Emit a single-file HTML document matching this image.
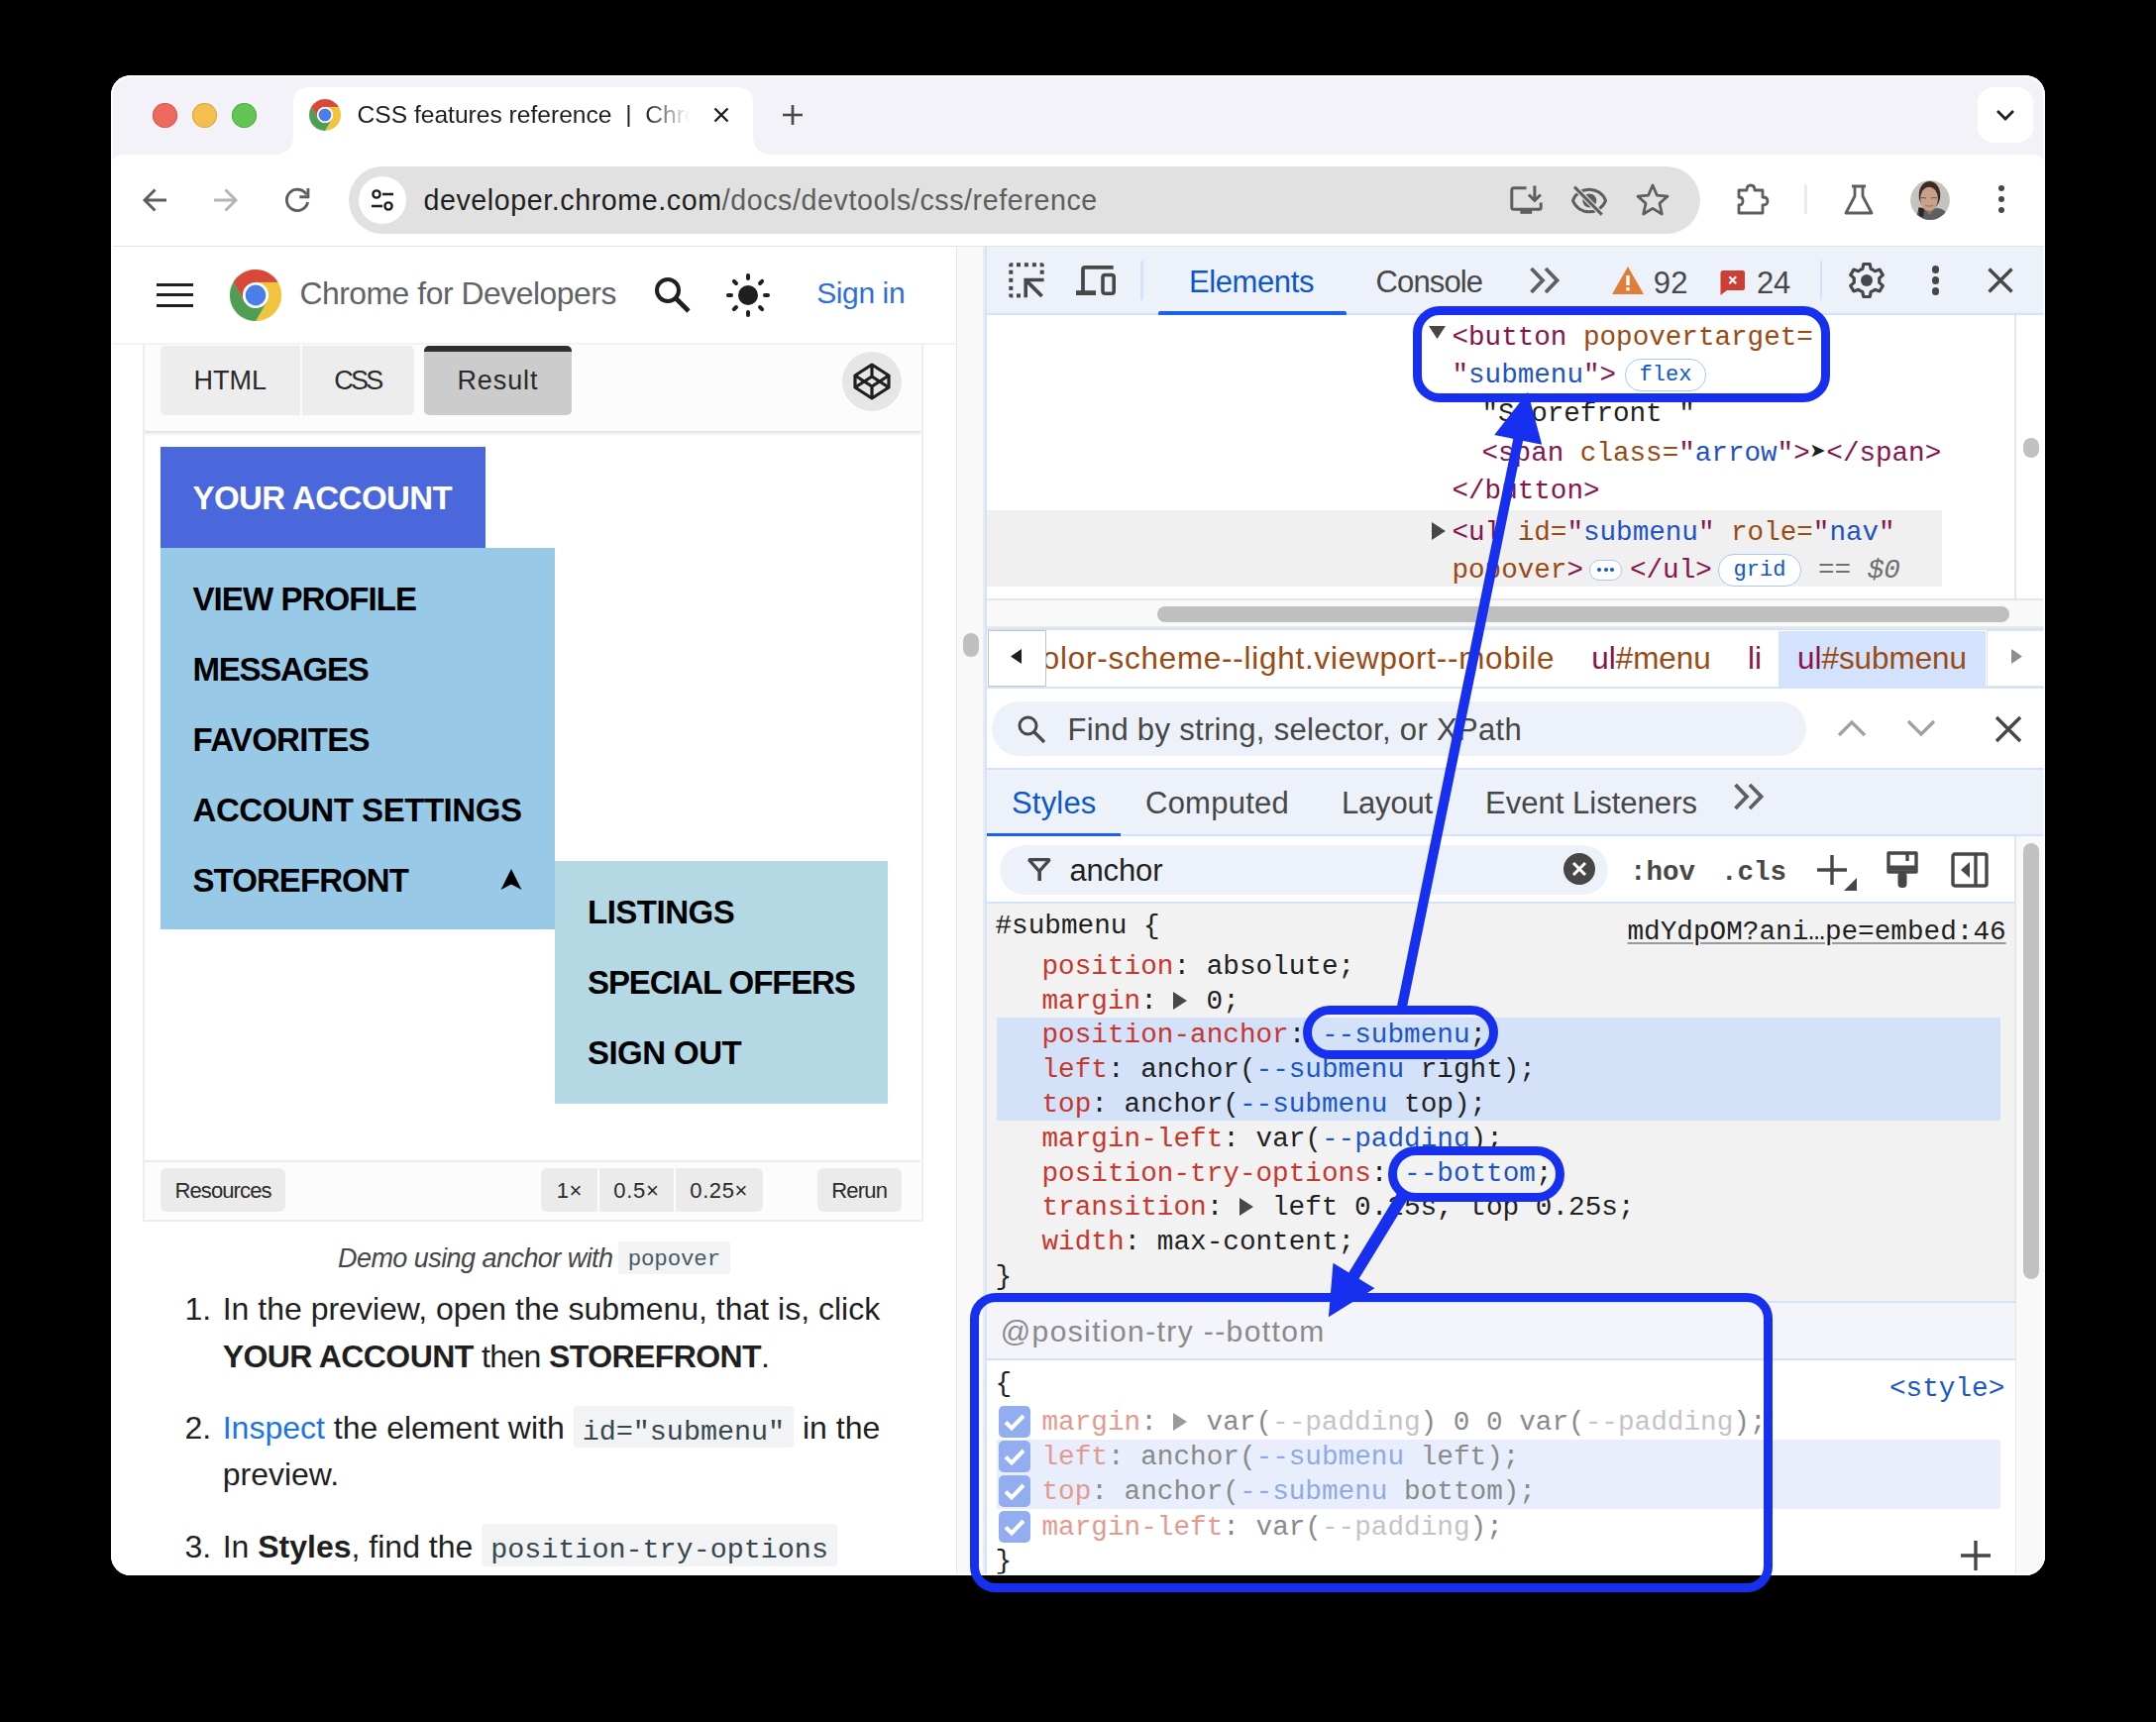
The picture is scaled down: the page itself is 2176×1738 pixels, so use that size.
<!DOCTYPE html><html><head><meta charset="utf-8"><style>
html,body{margin:0;padding:0;width:2176px;height:1738px;overflow:hidden;background:#000;}
.a{position:absolute;}
.t{white-space:pre;}
b{font-weight:700;}
</style></head><body>
<div class="a" style="left:112.0px;top:76.0px;width:1952.0px;height:1514.0px;background:#fff;border-radius:20px;"></div>
<div class="a" style="left:0;top:0;width:2176px;height:1738px;clip-path:inset(76px 112px 148px 112px round 20px);">
<div class="a" style="left:112.0px;top:76.0px;width:1952.0px;height:93.0px;background:#f3f2f8;"></div>
<div class="a" style="left:153.5px;top:104.0px;width:25.0px;height:25.0px;background:#ee6a5f;border-radius:50%;box-shadow:inset 0 0 0 1px #d7594f;"></div>
<div class="a" style="left:193.5px;top:104.0px;width:25.0px;height:25.0px;background:#f5bf4f;border-radius:50%;box-shadow:inset 0 0 0 1px #dba63c;"></div>
<div class="a" style="left:233.5px;top:104.0px;width:25.0px;height:25.0px;background:#62c554;border-radius:50%;box-shadow:inset 0 0 0 1px #52ad45;"></div>
<svg class="a" style="left:276.0px;top:88.0px;" width="504" height="68" viewBox="0 0 504 68"><path d="M0 68 Q20 68 20 48 L20 16 Q20 0 36 0 L468 0 Q484 0 484 16 L484 48 Q484 68 504 68 Z" fill="#fff"/></svg>
<svg class="a" style="left:311.6px;top:99.8px;" width="32" height="32" viewBox="0 0 32 32"><g transform="translate(16,16) scale(16)"><path d="M0 -0.5H0.866A1 1 0 0 0 -0.866 -0.5L-0.433 0.25A0.5 0.5 0 0 1 0 -0.5Z" fill="#d8493a" stroke="#d8493a" stroke-width="0.01"/><path d="M0 -0.5H0.866A1 1 0 0 0 -0.866 -0.5L-0.433 0.25A0.5 0.5 0 0 1 0 -0.5Z" fill="#f2c33e" transform="rotate(120)" stroke="#f2c33e" stroke-width="0.01"/><path d="M0 -0.5H0.866A1 1 0 0 0 -0.866 -0.5L-0.433 0.25A0.5 0.5 0 0 1 0 -0.5Z" fill="#4e9f54" transform="rotate(240)" stroke="#4e9f54" stroke-width="0.01"/><circle r="0.5" fill="#fff"/><circle r="0.4" fill="#4a7ee8"/></g></svg>
<div class="a t" style="left:360.5px;top:103.7px;font:24.6px/24.6px 'Liberation Sans',sans-serif;color:#1f1f1f;white-space:pre;width:335px;overflow:hidden;-webkit-mask-image:linear-gradient(90deg,#000 290px,transparent 335px);">CSS features reference  |  Chrome for Developers</div>
<svg class="a" style="left:719.8px;top:108.3px;" width="16" height="16" viewBox="0 0 16 16"><path d="M1.5 1.5L14.5 14.5M14.5 1.5L1.5 14.5" stroke="#1f1f1f" stroke-width="2.4"/></svg>
<svg class="a" style="left:789.6px;top:106.0px;" width="20" height="20" viewBox="0 0 20 20"><path d="M10 0V20M0 10H20" stroke="#474747" stroke-width="2.6"/></svg>
<div class="a" style="left:1996.0px;top:88.0px;width:56.0px;height:56.0px;background:#fff;border-radius:16px;"></div>
<svg class="a" style="left:2014.0px;top:110.0px;" width="20" height="12" viewBox="0 0 20 12"><path d="M2 2L10 10L18 2" stroke="#1f1f1f" stroke-width="2.8" fill="none"/></svg>
<div class="a" style="left:112.0px;top:156.0px;width:1952.0px;height:93.0px;background:#fff;border-radius:12px 12px 0 0;"></div>
<div class="a" style="left:112.0px;top:247.5px;width:1952.0px;height:2.0px;background:#e3e3e3;"></div>
<svg class="a" style="left:140.0px;top:186.0px;" width="32" height="32" viewBox="0 0 32 32"><path d="M28 16H6M16.5 5.5L6 16L16.5 26.5" stroke="#5e5e5e" stroke-width="2.9" fill="none"/></svg>
<svg class="a" style="left:212.0px;top:186.0px;" width="32" height="32" viewBox="0 0 32 32"><path d="M4 16H26M15.5 5.5L26 16L15.5 26.5" stroke="#b4b4b4" stroke-width="2.9" fill="none"/></svg>
<svg class="a" style="left:284.0px;top:186.0px;" width="32" height="32" viewBox="0 0 32 32"><path d="M26.6 18A10.7 10.7 0 1 1 25.2 10.2" stroke="#5e5e5e" stroke-width="2.9" fill="none"/><path d="M26.9 4V12.8H18.3" stroke="#5e5e5e" stroke-width="2.9" fill="none"/></svg>
<div class="a" style="left:352.0px;top:168.0px;width:1364.0px;height:68.0px;background:#e1e1e1;border-radius:34px;"></div>
<div class="a" style="left:362.0px;top:178.0px;width:48.0px;height:48.0px;background:#fff;border-radius:50%;"></div>
<svg class="a" style="left:372.0px;top:188.0px;" width="28" height="28" viewBox="0 0 28 28"><circle cx="8" cy="8" r="3.6" stroke="#1f1f1f" stroke-width="2.4" fill="none"/><path d="M14 8H25" stroke="#1f1f1f" stroke-width="2.4"/><circle cx="20" cy="20" r="3.6" stroke="#1f1f1f" stroke-width="2.4" fill="none"/><path d="M3 20H14" stroke="#1f1f1f" stroke-width="2.4"/></svg>
<div class="a t" style="left:427.4px;top:187.7px;font:28.6px/28.6px 'Liberation Sans',sans-serif;letter-spacing:0.6px;color:#1f1f1f;white-space:pre;">developer.chrome.com<span style="color:#5e5e5e">/docs/devtools/css/reference</span></div>
<svg class="a" style="left:1522.0px;top:184.0px;" width="40" height="36" viewBox="0 0 40 36"><path d="M18.5 5.8H5.8Q3.8 5.8 3.8 7.8V25.2Q3.8 27.2 5.8 27.2H31.2Q33.2 27.2 33.2 25.2V20.5" stroke="#5e5e5e" stroke-width="3" fill="none"/><path d="M26.9 3.5V18.5M20.9 12.5L26.9 18.5L32.9 12.5" stroke="#5e5e5e" stroke-width="3" fill="none"/><rect x="12.4" y="27.5" width="11.8" height="4.3" fill="#5e5e5e"/></svg>
<svg class="a" style="left:1584.0px;top:184.0px;" width="40" height="40" viewBox="0 0 40 40"><path d="M3.5 18.5C9 3.5 31 3.5 36.5 18.5C31 33.5 9 33.5 3.5 18.5Z" stroke="#5e5e5e" stroke-width="3" fill="none"/><circle cx="20.3" cy="18.5" r="7" fill="#5e5e5e"/><path d="M5 4.6L32.7 32.6" stroke="#e1e1e1" stroke-width="5.5"/><path d="M5 4.6L32.7 32.6" stroke="#5e5e5e" stroke-width="3"/></svg>
<svg class="a" style="left:1650.0px;top:184.0px;" width="36" height="36" viewBox="0 0 36 36"><path d="M18 3L22.4 13.2L33 14.1L25 21.2L27.3 32L18 26.4L8.7 32L11 21.2L3 14.1L13.6 13.2Z" stroke="#5e5e5e" stroke-width="2.8" fill="none" stroke-linejoin="round"/></svg>
<svg class="a" style="left:1750.0px;top:182.0px;" width="38" height="38" viewBox="0 0 38 38"><path d="M5 10H13Q13 5 17 5Q21 5 21 10H29V17Q34 17 34 21Q34 25 29 25V33H5V25Q9 25 9 21Q9 17 5 17Z" stroke="#5e5e5e" stroke-width="2.8" fill="none" stroke-linejoin="round"/></svg>
<div class="a" style="left:1820.5px;top:186.0px;width:3.0px;height:30.0px;background:#ebeaf2;border-radius:2px;"></div>
<svg class="a" style="left:1858.0px;top:184.0px;" width="36" height="36" viewBox="0 0 36 36"><path d="M11 4H25M14 4V14L5 31H31L22 14V4" stroke="#5e5e5e" stroke-width="2.8" fill="none" stroke-linejoin="round"/></svg>
<svg class="a" style="left:1928.0px;top:182.0px;" width="40" height="40" viewBox="0 0 40 40"><defs><clipPath id="av"><circle cx="20" cy="20" r="19.9"/></clipPath></defs><g clip-path="url(#av)"><rect width="40" height="40" fill="#c3c3bf"/><ellipse cx="19.5" cy="15" rx="10.8" ry="14" fill="#3a2b23"/><path d="M5 40L8 30Q13 25 19 31Q27 25 35 31L37 40Z" fill="#5b5f61"/><path d="M8 28Q11 26 14 30L13 37L9 36Z" fill="#2e2420"/><path d="M12.5 27L19.5 35L25 28Z" fill="#9c7058"/><ellipse cx="19" cy="18.8" rx="9" ry="12" fill="#c9a08a"/><path d="M10 18Q13 17 16 18M21 18Q24 17 27 18" stroke="#6b5a50" stroke-width="1.2" fill="none"/><path d="M15 25Q19 27.5 23 25" stroke="#a87a70" stroke-width="1.4" fill="none"/></g></svg>
<div class="a" style="left:2017.0px;top:187.0px;width:6.0px;height:6.0px;background:#474747;border-radius:50%;"></div>
<div class="a" style="left:2017.0px;top:198.0px;width:6.0px;height:6.0px;background:#474747;border-radius:50%;"></div>
<div class="a" style="left:2017.0px;top:209.0px;width:6.0px;height:6.0px;background:#474747;border-radius:50%;"></div>
<div class="a" style="left:112.0px;top:249.0px;width:853.0px;height:1341.0px;background:#fff;"></div>
<div class="a" style="left:144.0px;top:300.0px;width:788.0px;height:932.5px;background:#fff;border:2px solid #ededed;box-sizing:border-box;"></div>
<div class="a" style="left:146.0px;top:347.0px;width:783.0px;height:88.0px;background:#fcfcfc;"></div>
<div class="a" style="left:162.0px;top:349.0px;width:141.0px;height:70.0px;background:#ededed;border-radius:5px 0 0 5px;"></div>
<div class="a" style="left:305.0px;top:349.0px;width:113.0px;height:70.0px;background:#ededed;border-radius:0 5px 5px 0;"></div>
<div class="a" style="left:428.0px;top:349.0px;width:149.0px;height:70.0px;background:#cccccc;border-radius:5px;border-top:6.5px solid #2f2f2f;box-sizing:border-box;"></div>
<div class="a t" style="left:195.4px;top:371.2px;font-family:'Liberation Sans',sans-serif;font-size:27.00px;line-height:27.00px;color:#2a2a2a;font-weight:400;font-style:normal;letter-spacing:0.025px;">HTML</div>
<div class="a t" style="left:337.3px;top:371.2px;font-family:'Liberation Sans',sans-serif;font-size:27.00px;line-height:27.00px;color:#2a2a2a;font-weight:400;font-style:normal;letter-spacing:-2.772px;">CSS</div>
<div class="a t" style="left:461.4px;top:371.2px;font-family:'Liberation Sans',sans-serif;font-size:27.00px;line-height:27.00px;color:#2a2a2a;font-weight:400;font-style:normal;letter-spacing:0.911px;">Result</div>
<div class="a" style="left:850.0px;top:355.0px;width:60.0px;height:60.0px;background:#e6e6e6;border-radius:50%;"></div>
<svg class="a" style="left:860.0px;top:365.0px;" width="40" height="40" viewBox="0 0 40 40"><g fill="none" stroke="#1f1f1f" stroke-width="3.2" stroke-linejoin="round"><path d="M20 3L37 14V26L20 37L3 26V14Z"/><path d="M3 14L20 25L37 14M20 3V14M3 26L20 15L37 26M20 37V26"/></g></svg>
<div class="a" style="left:146.0px;top:435.0px;width:783.0px;height:736.0px;background:#fff;"></div>
<div class="a" style="left:146.0px;top:435.0px;width:783.0px;height:6.0px;background:linear-gradient(rgba(0,0,0,0.13),rgba(0,0,0,0.04) 50%,rgba(0,0,0,0));"></div>
<div class="a" style="left:162.0px;top:451.0px;width:327.8px;height:101.8px;background:#4a68db;"></div>
<div class="a" style="left:162.0px;top:553.0px;width:397.9px;height:385.0px;background:#98cae8;"></div>
<div class="a" style="left:559.9px;top:868.8px;width:335.9px;height:245.2px;background:#b5d8e5;"></div>
<div class="a t" style="left:194.5px;top:486.4px;font-family:'Liberation Sans',sans-serif;font-size:33.00px;line-height:33.00px;color:#fff;font-weight:700;font-style:normal;letter-spacing:-0.548px;">YOUR ACCOUNT</div>
<div class="a t" style="left:194.5px;top:588.4px;font-family:'Liberation Sans',sans-serif;font-size:33.00px;line-height:33.00px;color:#000;font-weight:700;font-style:normal;letter-spacing:-0.918px;">VIEW PROFILE</div>
<div class="a t" style="left:194.5px;top:658.8px;font-family:'Liberation Sans',sans-serif;font-size:33.00px;line-height:33.00px;color:#000;font-weight:700;font-style:normal;letter-spacing:-1.256px;">MESSAGES</div>
<div class="a t" style="left:194.5px;top:730.0px;font-family:'Liberation Sans',sans-serif;font-size:33.00px;line-height:33.00px;color:#000;font-weight:700;font-style:normal;letter-spacing:-0.698px;">FAVORITES</div>
<div class="a t" style="left:194.5px;top:801.4px;font-family:'Liberation Sans',sans-serif;font-size:33.00px;line-height:33.00px;color:#000;font-weight:700;font-style:normal;letter-spacing:-0.448px;">ACCOUNT SETTINGS</div>
<div class="a t" style="left:194.5px;top:872.2px;font-family:'Liberation Sans',sans-serif;font-size:33.00px;line-height:33.00px;color:#000;font-weight:700;font-style:normal;letter-spacing:-0.933px;">STOREFRONT</div>
<svg class="a" style="left:504.0px;top:876.0px;" width="24" height="24" viewBox="0 0 24 24"><path d="M12 1L22.5 22L12 16.5L1.5 22Z" fill="#000"/></svg>
<div class="a t" style="left:593.0px;top:904.0px;font-family:'Liberation Sans',sans-serif;font-size:33.00px;line-height:33.00px;color:#000;font-weight:700;font-style:normal;letter-spacing:-0.497px;">LISTINGS</div>
<div class="a t" style="left:593.0px;top:975.0px;font-family:'Liberation Sans',sans-serif;font-size:33.00px;line-height:33.00px;color:#000;font-weight:700;font-style:normal;letter-spacing:-1.124px;">SPECIAL OFFERS</div>
<div class="a t" style="left:593.0px;top:1046.0px;font-family:'Liberation Sans',sans-serif;font-size:33.00px;line-height:33.00px;color:#000;font-weight:700;font-style:normal;letter-spacing:-0.563px;">SIGN OUT</div>
<div class="a" style="left:146.0px;top:1171.0px;width:783.0px;height:59.0px;background:#fcfcfc;border-top:2px solid #ebebeb;box-sizing:border-box;"></div>
<div class="a" style="left:162.0px;top:1179.0px;width:125.8px;height:43.5px;background:#ebebeb;border-radius:6px;"></div>
<div class="a" style="left:546.2px;top:1179.0px;width:56.8px;height:43.5px;background:#ebebeb;border-radius:6px 0 0 6px;"></div>
<div class="a" style="left:605.0px;top:1179.0px;width:75.0px;height:43.5px;background:#ebebeb;"></div>
<div class="a" style="left:681.8px;top:1179.0px;width:87.9px;height:43.5px;background:#ebebeb;border-radius:0 6px 6px 0;"></div>
<div class="a" style="left:824.7px;top:1179.0px;width:85.1px;height:43.5px;background:#ebebeb;border-radius:6px;"></div>
<div class="a t" style="left:176.4px;top:1191.3px;font-family:'Liberation Sans',sans-serif;font-size:22.00px;line-height:22.00px;color:#2a2a2a;font-weight:400;font-style:normal;letter-spacing:-0.873px;">Resources</div>
<div class="a t" style="left:561.7px;top:1191.3px;font-family:'Liberation Sans',sans-serif;font-size:22.00px;line-height:22.00px;color:#2a2a2a;font-weight:400;font-style:normal;letter-spacing:0.458px;">1×</div>
<div class="a t" style="left:619.2px;top:1191.3px;font-family:'Liberation Sans',sans-serif;font-size:22.00px;line-height:22.00px;color:#2a2a2a;font-weight:400;font-style:normal;letter-spacing:0.742px;">0.5×</div>
<div class="a t" style="left:696.3px;top:1191.3px;font-family:'Liberation Sans',sans-serif;font-size:22.00px;line-height:22.00px;color:#2a2a2a;font-weight:400;font-style:normal;letter-spacing:0.607px;">0.25×</div>
<div class="a t" style="left:839.2px;top:1191.3px;font-family:'Liberation Sans',sans-serif;font-size:22.00px;line-height:22.00px;color:#2a2a2a;font-weight:400;font-style:normal;letter-spacing:-0.784px;">Rerun</div>
<div class="a t" style="left:341.0px;top:1256.5px;font-family:'Liberation Sans',sans-serif;font-size:27.00px;line-height:27.00px;color:#474747;font-weight:400;font-style:italic;letter-spacing:-0.552px;">Demo using anchor with</div>
<div class="a" style="left:624.0px;top:1253.2px;width:112.8px;height:33.3px;background:#f1f3f4;border-radius:3px;"></div>
<div class="a t" style="left:633.7px;top:1260.4px;font-family:'Liberation Mono',monospace;font-size:22.50px;line-height:22.50px;color:#4b5a63;font-weight:400;font-style:normal;letter-spacing:-0.174px;">popover</div>
<div class="a" style="left:112.0px;top:249.0px;width:853.0px;height:98.0px;background:#fff;"></div>
<div class="a" style="left:112.0px;top:345.5px;width:853.0px;height:2.0px;background:#f1f3f4;"></div>
<div class="a" style="left:157.5px;top:285.9px;width:37.0px;height:3.2px;background:#1f1f1f;"></div>
<div class="a" style="left:157.5px;top:296.0px;width:37.0px;height:3.2px;background:#1f1f1f;"></div>
<div class="a" style="left:157.5px;top:306.8px;width:37.0px;height:3.2px;background:#1f1f1f;"></div>
<svg class="a" style="left:232.0px;top:271.6px;" width="52" height="52" viewBox="0 0 52 52"><g transform="translate(26,26) scale(26)"><path d="M0 -0.5H0.866A1 1 0 0 0 -0.866 -0.5L-0.433 0.25A0.5 0.5 0 0 1 0 -0.5Z" fill="#d8493a" stroke="#d8493a" stroke-width="0.01"/><path d="M0 -0.5H0.866A1 1 0 0 0 -0.866 -0.5L-0.433 0.25A0.5 0.5 0 0 1 0 -0.5Z" fill="#f2c33e" transform="rotate(120)" stroke="#f2c33e" stroke-width="0.01"/><path d="M0 -0.5H0.866A1 1 0 0 0 -0.866 -0.5L-0.433 0.25A0.5 0.5 0 0 1 0 -0.5Z" fill="#4e9f54" transform="rotate(240)" stroke="#4e9f54" stroke-width="0.01"/><circle r="0.5" fill="#fff"/><circle r="0.4" fill="#4a7ee8"/></g></svg>
<div class="a t" style="left:302.4px;top:280.8px;font-family:'Liberation Sans',sans-serif;font-size:31.80px;line-height:31.80px;color:#5f6368;font-weight:400;font-style:normal;letter-spacing:-0.435px;">Chrome for Developers</div>
<svg class="a" style="left:659.0px;top:278.0px;" width="40" height="40" viewBox="0 0 40 40"><circle cx="15" cy="15" r="11" stroke="#1f1f1f" stroke-width="4" fill="none"/><path d="M23 23L36 36" stroke="#1f1f1f" stroke-width="4.6"/></svg>
<svg class="a" style="left:733.0px;top:276.0px;" width="44" height="44" viewBox="0 0 44 44"><circle cx="22" cy="22" r="10" fill="#1f1f1f"/><rect x="20" y="0" width="4" height="7" rx="2" fill="#1f1f1f" transform="rotate(0 22 22)"/><rect x="20" y="0" width="4" height="7" rx="2" fill="#1f1f1f" transform="rotate(45 22 22)"/><rect x="20" y="0" width="4" height="7" rx="2" fill="#1f1f1f" transform="rotate(90 22 22)"/><rect x="20" y="0" width="4" height="7" rx="2" fill="#1f1f1f" transform="rotate(135 22 22)"/><rect x="20" y="0" width="4" height="7" rx="2" fill="#1f1f1f" transform="rotate(180 22 22)"/><rect x="20" y="0" width="4" height="7" rx="2" fill="#1f1f1f" transform="rotate(225 22 22)"/><rect x="20" y="0" width="4" height="7" rx="2" fill="#1f1f1f" transform="rotate(270 22 22)"/><rect x="20" y="0" width="4" height="7" rx="2" fill="#1f1f1f" transform="rotate(315 22 22)"/></svg>
<div class="a t" style="left:824.2px;top:281.4px;font-family:'Liberation Sans',sans-serif;font-size:30.00px;line-height:30.00px;color:#2f6fdc;font-weight:400;font-style:normal;letter-spacing:-0.39px;">Sign in</div>
<div class="a t" style="left:186.5px;top:1305.1px;font-family:'Liberation Sans',sans-serif;font-size:32px;line-height:32px;color:#1f1f1f;letter-spacing:0px;">1.</div>
<div class="a t" style="left:224.7px;top:1305.1px;font-family:'Liberation Sans',sans-serif;font-size:32px;line-height:32px;color:#1f1f1f;letter-spacing:0px;">In the preview, open the submenu, that is, click</div>
<div class="a t" style="left:224.7px;top:1352.8px;font-family:'Liberation Sans',sans-serif;font-size:32px;line-height:32px;color:#1f1f1f;letter-spacing:-0.6px;"><b>YOUR ACCOUNT</b> then <b>STOREFRONT</b>.</div>
<div class="a t" style="left:186.5px;top:1425.1px;font-family:'Liberation Sans',sans-serif;font-size:32px;line-height:32px;color:#1f1f1f;letter-spacing:0px;">2.</div>
<div class="a t" style="left:224.7px;top:1425.1px;font-family:'Liberation Sans',sans-serif;font-size:32px;line-height:32px;color:#1f1f1f;letter-spacing:0px;"><span style="color:#1a73e8">Inspect</span> the element with <span style="font-family:'Liberation Mono',monospace;font-size:28.4px;background:#f1f3f4;color:#37474f;padding:9.5px 9px 0 9px;border-radius:4px;">id=&quot;submenu&quot;</span> in the</div>
<div class="a t" style="left:224.7px;top:1472.2px;font-family:'Liberation Sans',sans-serif;font-size:32px;line-height:32px;color:#1f1f1f;letter-spacing:0px;">preview.</div>
<div class="a t" style="left:186.5px;top:1544.8px;font-family:'Liberation Sans',sans-serif;font-size:32px;line-height:32px;color:#1f1f1f;letter-spacing:0px;">3.</div>
<div class="a t" style="left:224.7px;top:1544.8px;font-family:'Liberation Sans',sans-serif;font-size:32px;line-height:32px;color:#1f1f1f;letter-spacing:0px;">In <b>Styles</b>, find the <span style="font-family:'Liberation Mono',monospace;font-size:28.4px;background:#f1f3f4;color:#37474f;padding:9.5px 9px 0 9px;border-radius:4px;">position-try-options</span></div>
<div class="a" style="left:965.0px;top:249.0px;width:1099.0px;height:1341.0px;background:#fff;"></div>
<div class="a" style="left:964.5px;top:249.0px;width:1.6px;height:1341.0px;background:#e6e6e6;"></div>
<div class="a" style="left:966.0px;top:249.0px;width:26.5px;height:1341.0px;background:#f9f9f9;"></div>
<div class="a" style="left:992.3px;top:249.0px;width:2.0px;height:1341.0px;background:#ececec;"></div>
<div class="a" style="left:994.3px;top:249.0px;width:1.8px;height:1341.0px;background:#d3e3fd;"></div>
<div class="a" style="left:972.0px;top:639.0px;width:16.0px;height:24.0px;background:#bfbfbf;border-radius:8px;"></div>
<div class="a" style="left:996.0px;top:249.0px;width:1068.0px;height:67.5px;background:#edf2fa;"></div>
<div class="a" style="left:996.0px;top:316.0px;width:1068.0px;height:2.0px;background:#d3e3fd;"></div>
<svg class="a" style="left:0;top:0" width="1200" height="320"><rect x="1026.0" y="265.2" width="4" height="4" fill="#474747"/><rect x="1033.9" y="265.2" width="4" height="4" fill="#474747"/><rect x="1041.9" y="265.2" width="4" height="4" fill="#474747"/><rect x="1018.3" y="272.7" width="4" height="4" fill="#474747"/><rect x="1018.3" y="280.8" width="4" height="4" fill="#474747"/><rect x="1018.3" y="288.9" width="4" height="4" fill="#474747"/><rect x="1049.7" y="272.7" width="4" height="4" fill="#474747"/><rect x="1026.0" y="296.4" width="4" height="4" fill="#474747"/><path d="M1018.3 269.2V267.2Q1018.3 265.2 1020.3 265.2H1022.3V269.2Z" fill="#474747"/><path d="M1053.7 269.2V267.2Q1053.7 265.2 1051.7 265.2H1049.7V269.2Z" fill="#474747"/><path d="M1018.3 296.4V298.4Q1018.3 300.4 1020.3 300.4H1022.3V296.4Z" fill="#474747"/><path d="M1035.2 300.3V282.5H1053.6" stroke="#474747" stroke-width="3.6" fill="none"/><path d="M1036.5 283.8L1051.6 299" stroke="#474747" stroke-width="3.8"/><path d="M1093 295V272Q1093 269.9 1095 269.9H1123.7" stroke="#474747" stroke-width="3.8" fill="none"/><rect x="1086" y="293.2" width="20" height="4.8" fill="#474747"/><rect x="1113" y="277.5" width="11.2" height="18.7" rx="2.2" stroke="#474747" stroke-width="3.6" fill="none"/></svg>
<div class="a" style="left:1151.0px;top:263.0px;width:2.6px;height:40.0px;background:#d3e3fd;"></div>
<div class="a t" style="left:1200.0px;top:268.9px;font-family:'Liberation Sans',sans-serif;font-size:31.00px;line-height:31.00px;color:#0b57d0;font-weight:400;font-style:normal;letter-spacing:-0.403px;">Elements</div>
<div class="a" style="left:1169.0px;top:313.5px;width:190.0px;height:4.5px;background:#1b62e6;border-radius:2px 2px 0 0;"></div>
<div class="a t" style="left:1388.6px;top:268.9px;font-family:'Liberation Sans',sans-serif;font-size:31.00px;line-height:31.00px;color:#474747;font-weight:400;font-style:normal;letter-spacing:-0.891px;">Console</div>
<svg class="a" style="left:1542.0px;top:268.0px;" width="36" height="30" viewBox="0 0 36 30"><path d="M3.5 3L15 15L3.5 27M18 3L29.5 15L18 27" stroke="#5f5f5f" stroke-width="3.8" fill="none"/></svg>
<svg class="a" style="left:1626.0px;top:268.0px;" width="34" height="30" viewBox="0 0 34 30"><path d="M17 1L33 29H1Z" fill="#e07d38"/><rect x="15.3" y="10" width="3.4" height="10" fill="#fff"/><rect x="15.3" y="22" width="3.4" height="3.4" fill="#fff"/></svg>
<div class="a t" style="left:1668.8px;top:269.6px;font-family:'Liberation Sans',sans-serif;font-size:31.00px;line-height:31.00px;color:#474747;font-weight:400;font-style:normal;letter-spacing:0.159px;">92</div>
<svg class="a" style="left:1736.0px;top:272.0px;" width="26" height="27" viewBox="0 0 26 27"><path d="M3 1H23Q25 1 25 3V19Q25 21 23 21H7L0.5 26V3Q0.5 1 3 1Z" fill="#cd3f33"/><path d="M9.3 7.3L16.2 14.2M16.2 7.3L9.3 14.2" stroke="#fff" stroke-width="2.2"/></svg>
<div class="a t" style="left:1773.0px;top:269.6px;font-family:'Liberation Sans',sans-serif;font-size:31.00px;line-height:31.00px;color:#474747;font-weight:400;font-style:normal;letter-spacing:-0.241px;">24</div>
<div class="a" style="left:1836.8px;top:263.0px;width:2.6px;height:40.0px;background:#d3e3fd;"></div>
<svg class="a" style="left:1865.0px;top:264.0px;" width="38" height="38" viewBox="0 0 38 38"><path d="M16 2H22L23 7L27.5 9L32 6L36 10L33 14.5L35 19L40 20V26" stroke="none" fill="none"/><circle cx="19" cy="19" r="6" fill="#474747"/><path d="M15.8 2.5H22.2L23.2 7.4Q25.6 8.2 27.4 9.7L32.1 8.1L35.3 13.6L31.6 16.9Q32 19 31.6 21.1L35.3 24.4L32.1 29.9L27.4 28.3Q25.6 29.8 23.2 30.6L22.2 35.5H15.8L14.8 30.6Q12.4 29.8 10.6 28.3L5.9 29.9L2.7 24.4L6.4 21.1Q6 19 6.4 16.9L2.7 13.6L5.9 8.1L10.6 9.7Q12.4 8.2 14.8 7.4Z" stroke="#474747" stroke-width="3.2" fill="none" stroke-linejoin="round"/></svg>
<div class="a" style="left:1949.8px;top:268.0px;width:7.6px;height:7.6px;background:#474747;border-radius:50%;"></div>
<div class="a" style="left:1949.8px;top:279.2px;width:7.6px;height:7.6px;background:#474747;border-radius:50%;"></div>
<div class="a" style="left:1949.8px;top:290.4px;width:7.6px;height:7.6px;background:#474747;border-radius:50%;"></div>
<svg class="a" style="left:2004.0px;top:268.0px;" width="30" height="30" viewBox="0 0 30 30"><path d="M3.5 3.5L26.5 26.5M26.5 3.5L3.5 26.5" stroke="#474747" stroke-width="3.4"/></svg>
<div class="a" style="left:996.0px;top:318.0px;width:1038.0px;height:286.0px;background:#fff;"></div>
<div class="a" style="left:2034.0px;top:318.0px;width:30.0px;height:286.0px;background:#fff;"></div>
<div class="a" style="left:2033.0px;top:318.0px;width:1.6px;height:286.0px;background:#e6e6e6;"></div>
<div class="a" style="left:2042.0px;top:442.0px;width:16.0px;height:20.0px;background:#c1c1c1;border-radius:8px;"></div>
<div class="a" style="left:996.0px;top:515.0px;width:964.0px;height:77.0px;background:#f0f0f0;"></div>
<svg class="a" style="left:1442.0px;top:329.0px;" width="18" height="14" viewBox="0 0 18 14"><path d="M0 0H17L8.5 13Z" fill="#474747"/></svg>
<div class="a t" style="left:1465.5px;top:326.8px;font-family:'Liberation Mono',monospace;font-size:27.6px;line-height:27.6px;"><span style="color:#87144d;">&lt;button </span><span style="color:#9a4a12;">popovertarget=</span></div>
<div class="a t" style="left:1465.5px;top:364.7px;font-family:'Liberation Mono',monospace;font-size:27.6px;line-height:27.6px;"><span style="color:#87144d;">&quot;</span><span style="color:#1f52c4;">submenu</span><span style="color:#87144d;">&quot;&gt;</span></div>
<div class="a t" style="left:1640px;top:361.5px;width:80px;height:31px;border:1.6px solid #a8c7fa;border-radius:16px;font:22px/31px 'Liberation Mono',monospace;color:#0b57d0;text-align:center;box-sizing:content-box;">flex</div>
<div class="a t" style="left:1495.5px;top:403.8px;font-family:'Liberation Mono',monospace;font-size:27.6px;line-height:27.6px;"><span style="color:#1f1f1f;">&quot;Storefront &quot;</span></div>
<div class="a t" style="left:1495.5px;top:443.8px;font-family:'Liberation Mono',monospace;font-size:27.6px;line-height:27.6px;"><span style="color:#87144d;">&lt;span </span><span style="color:#9a4a12;">class=</span><span style="color:#87144d;">&quot;</span><span style="color:#1f52c4;">arrow</span><span style="color:#87144d;">&quot;&gt;</span><span style="color:#1f1f1f;">➤</span><span style="color:#87144d;">&lt;/span&gt;</span></div>
<div class="a t" style="left:1465.5px;top:482.2px;font-family:'Liberation Mono',monospace;font-size:27.6px;line-height:27.6px;"><span style="color:#87144d;">&lt;/button&gt;</span></div>
<svg class="a" style="left:1445.0px;top:527.0px;" width="15" height="18" viewBox="0 0 15 18"><path d="M0 0V18L14 9Z" fill="#474747"/></svg>
<div class="a t" style="left:1465.5px;top:523.8px;font-family:'Liberation Mono',monospace;font-size:27.6px;line-height:27.6px;"><span style="color:#87144d;">&lt;ul </span><span style="color:#9a4a12;">id=</span><span style="color:#87144d;">&quot;</span><span style="color:#1f52c4;">submenu</span><span style="color:#87144d;">&quot; </span><span style="color:#9a4a12;">role=</span><span style="color:#87144d;">&quot;</span><span style="color:#1f52c4;">nav</span><span style="color:#87144d;">&quot;</span></div>
<div class="a t" style="left:1465.5px;top:562.2px;font-family:'Liberation Mono',monospace;font-size:27.6px;line-height:27.6px;"><span style="color:#9a4a12;">popover</span><span style="color:#87144d;">&gt;</span></div>
<div class="a" style="left:1604px;top:565px;width:31px;height:19px;border:1.6px solid #a8c7fa;border-radius:10px;background:#fff;"></div>
<div class="a" style="left:1612.0px;top:573.0px;width:4.0px;height:4.0px;background:#0b57d0;border-radius:50%;"></div>
<div class="a" style="left:1618.5px;top:573.0px;width:4.0px;height:4.0px;background:#0b57d0;border-radius:50%;"></div>
<div class="a" style="left:1625.0px;top:573.0px;width:4.0px;height:4.0px;background:#0b57d0;border-radius:50%;"></div>
<div class="a t" style="left:1645px;top:562.2px;font-family:'Liberation Mono',monospace;font-size:27.6px;line-height:27.6px;"><span style="color:#87144d;">&lt;/ul&gt;</span></div>
<div class="a t" style="left:1734px;top:559px;width:82px;height:31px;border:1.6px solid #a8c7fa;border-radius:16px;font:22px/31px 'Liberation Mono',monospace;color:#0b57d0;text-align:center;background:#fff;">grid</div>
<div class="a t" style="left:1835px;top:562.2px;font-family:'Liberation Mono',monospace;font-size:27.6px;line-height:27.6px;"><span style="color:#6f6f6f;">== </span><span style="color:#6f6f6f;font-style:italic">$0</span></div>
<div class="a" style="left:996.0px;top:604.0px;width:1068.0px;height:2.0px;background:#e6e6e6;"></div>
<div class="a" style="left:996.0px;top:606.0px;width:1068.0px;height:26.0px;background:#f9f9f9;"></div>
<div class="a" style="left:1168.0px;top:612.0px;width:860.0px;height:16.0px;background:#bfbfbf;border-radius:8px;"></div>
<div class="a" style="left:996.0px;top:632.0px;width:1068.0px;height:2.0px;background:#e8e8e8;"></div>
<div class="a" style="left:996.0px;top:634.0px;width:1068.0px;height:2.0px;background:#d3e3fd;"></div>
<div class="a" style="left:996.0px;top:636.0px;width:1068.0px;height:57.0px;background:#fff;"></div>
<div class="a" style="left:996.0px;top:693.0px;width:1068.0px;height:2.0px;background:#d3e3fd;"></div>
<div class="a" style="left:997px;top:636.2px;width:58.7px;height:56.5px;border:1.6px solid #c4c4c4;box-sizing:border-box;background:#fff;"></div>
<svg class="a" style="left:1020.0px;top:655.0px;" width="12" height="15" viewBox="0 0 12 15"><path d="M11 0V15L0 7.5Z" fill="#1f1f1f"/></svg>
<div class="a" style="left:1056px;top:637px;width:739px;height:56px;overflow:hidden;"><div class="t" style="position:absolute;left:-92.6px;top:12.3px;font-family:'Liberation Sans',sans-serif;font-size:31.4px;line-height:31.4px;letter-spacing:0.78px;"><span style="color:#87144d;">html</span><span style="color:#9a4a12;">.color-scheme--light.viewport--mobile</span></div></div>
<div class="a t" style="left:1606.3px;top:649.3px;font-family:'Liberation Sans',sans-serif;font-size:31.4px;line-height:31.4px;"><span style="color:#87144d;">ul</span><span style="color:#9a4a12;">#menu</span></div>
<div class="a t" style="left:1764px;top:649.3px;font-family:'Liberation Sans',sans-serif;font-size:31.4px;line-height:31.4px;"><span style="color:#87144d;">li</span></div>
<div class="a" style="left:1795.0px;top:637.0px;width:208.6px;height:56.0px;background:#d3e3fd;"></div>
<div class="a t" style="left:1814px;top:649.3px;font-family:'Liberation Sans',sans-serif;font-size:31.4px;line-height:31.4px;"><span style="color:#87144d;">ul</span><span style="color:#9a4a12;">#submenu</span></div>
<div class="a" style="left:2005px;top:636.2px;width:60px;height:56.5px;border:1.6px solid #e3e3e3;box-sizing:border-box;background:#fff;"></div>
<svg class="a" style="left:2030.0px;top:655.0px;" width="12" height="15" viewBox="0 0 12 15"><path d="M0 0V15L11 7.5Z" fill="#8f8f8f"/></svg>
<div class="a" style="left:996.0px;top:695.0px;width:1068.0px;height:80.0px;background:#fff;"></div>
<div class="a" style="left:996.0px;top:775.0px;width:1068.0px;height:2.0px;background:#d3e3fd;"></div>
<div class="a" style="left:1001.0px;top:708.0px;width:822.0px;height:54.7px;background:#edf2fa;border-radius:27.4px;"></div>
<svg class="a" style="left:1026.0px;top:721.0px;" width="30" height="30" viewBox="0 0 30 30"><circle cx="11.5" cy="11.5" r="8.5" stroke="#474747" stroke-width="3" fill="none"/><path d="M18 18L28 28" stroke="#474747" stroke-width="3.2"/></svg>
<div class="a t" style="left:1077.4px;top:721.2px;font-family:'Liberation Sans',sans-serif;font-size:31.00px;line-height:31.00px;color:#474747;font-weight:400;font-style:normal;letter-spacing:0.312px;">Find by string, selector, or XPath</div>
<svg class="a" style="left:1853.0px;top:725.0px;" width="32" height="20" viewBox="0 0 32 20"><path d="M3 17L16 4L29 17" stroke="#a0a0a0" stroke-width="3.2" fill="none"/></svg>
<svg class="a" style="left:1923.0px;top:725.0px;" width="32" height="20" viewBox="0 0 32 20"><path d="M3 3L16 16L29 3" stroke="#a0a0a0" stroke-width="3.2" fill="none"/></svg>
<svg class="a" style="left:2011.0px;top:720.0px;" width="32" height="32" viewBox="0 0 32 32"><path d="M4 4L28 28M28 4L4 28" stroke="#474747" stroke-width="3.4"/></svg>
<div class="a" style="left:996.0px;top:777.0px;width:1068.0px;height:65.0px;background:#edf2fa;"></div>
<div class="a" style="left:996.0px;top:842.0px;width:1068.0px;height:2.0px;background:#d3e3fd;"></div>
<div class="a t" style="left:1021.0px;top:794.9px;font-family:'Liberation Sans',sans-serif;font-size:31.00px;line-height:31.00px;color:#0b57d0;font-weight:400;font-style:normal;letter-spacing:0.18px;">Styles</div>
<div class="a" style="left:996.0px;top:841.0px;width:135.0px;height:3.8px;background:#1b62e6;"></div>
<div class="a t" style="left:1156.0px;top:794.9px;font-family:'Liberation Sans',sans-serif;font-size:31.00px;line-height:31.00px;color:#474747;font-weight:400;font-style:normal;letter-spacing:0.247px;">Computed</div>
<div class="a t" style="left:1354.0px;top:794.9px;font-family:'Liberation Sans',sans-serif;font-size:31.00px;line-height:31.00px;color:#474747;font-weight:400;font-style:normal;letter-spacing:-0.179px;">Layout</div>
<div class="a t" style="left:1499.0px;top:794.9px;font-family:'Liberation Sans',sans-serif;font-size:31.00px;line-height:31.00px;color:#474747;font-weight:400;font-style:normal;letter-spacing:0.022px;">Event Listeners</div>
<svg class="a" style="left:1748.0px;top:789.0px;" width="36" height="30" viewBox="0 0 36 30"><path d="M3.5 3L15 15L3.5 27M18 3L29.5 15L18 27" stroke="#5f5f5f" stroke-width="3.8" fill="none"/></svg>
<div class="a" style="left:996.0px;top:844.0px;width:1038.0px;height:66.0px;background:#fff;"></div>
<div class="a" style="left:996.0px;top:910.0px;width:1038.0px;height:2.0px;background:#d3e3fd;"></div>
<div class="a" style="left:1009.0px;top:853.0px;width:614.0px;height:50.0px;background:#edf2fa;border-radius:25px;"></div>
<svg class="a" style="left:1030px;top:860px" width="36" height="36"><path d="M8.4 7.6H29.4L18.9 19.4Z" stroke="#474747" stroke-width="3.2" fill="none" stroke-linejoin="bevel"/><rect x="17.4" y="18" width="3.6" height="11" fill="#474747"/></svg>
<div class="a t" style="left:1079.4px;top:863.0px;font-family:'Liberation Sans',sans-serif;font-size:31.00px;line-height:31.00px;color:#1f1f1f;font-weight:400;font-style:normal;letter-spacing:-0.131px;">anchor</div>
<svg class="a" style="left:1578.0px;top:861.0px;" width="32" height="32" viewBox="0 0 32 32"><circle cx="16" cy="16" r="16" fill="#474747"/><path d="M10 10L22 22M22 10L10 22" stroke="#fff" stroke-width="3"/></svg>
<div class="a t" style="left:1645px;top:867.0px;font-family:'Liberation Mono',monospace;font-size:27.5px;line-height:27.5px;font-weight:700;color:#474747;">:hov</div>
<div class="a t" style="left:1737px;top:867.0px;font-family:'Liberation Mono',monospace;font-size:27.5px;line-height:27.5px;font-weight:700;color:#474747;">.cls</div>
<svg class="a" style="left:1832.0px;top:860.0px;" width="44" height="40" viewBox="0 0 44 40"><path d="M17 3V33M2 18H32" stroke="#474747" stroke-width="3.4"/><path d="M42 26V39H29Z" fill="#474747"/></svg>
<svg class="a" style="left:1903.0px;top:858.0px;" width="34" height="40" viewBox="0 0 34 40"><path d="M3 3H31V22H3Z" stroke="#474747" stroke-width="3.4" fill="none" stroke-linejoin="round"/><path d="M22 3V11" stroke="#474747" stroke-width="3.4"/><path d="M3 18H31" stroke="#474747" stroke-width="5"/><rect x="12.5" y="22" width="9" height="16" rx="4" fill="#474747"/></svg>
<svg class="a" style="left:1969.0px;top:860.0px;" width="40" height="36" viewBox="0 0 40 36"><rect x="2" y="2" width="34" height="32" rx="2" stroke="#474747" stroke-width="3.4" fill="none"/><path d="M25 2V34" stroke="#474747" stroke-width="3.4"/><path d="M19 10V26L10 18Z" fill="#474747"/></svg>
<div class="a" style="left:2034.0px;top:844.0px;width:30.0px;height:746.0px;background:#f9f9f9;"></div>
<div class="a" style="left:2033.0px;top:844.0px;width:1.6px;height:746.0px;background:#e6e6e6;"></div>
<div class="a" style="left:2042.0px;top:851.0px;width:16.0px;height:440.0px;background:#c1c1c1;border-radius:8px;"></div>
<div class="a" style="left:996.0px;top:912.0px;width:1037.0px;height:401.0px;background:#f2f2f2;"></div>
<div class="a" style="left:1006.0px;top:1027.3px;width:1013.0px;height:103.7px;background:#d3e1f9;"></div>
<div class="a t" style="left:1004.5px;top:920.7px;font-family:'Liberation Mono',monospace;font-size:27.7px;line-height:27.7px;opacity:1;"><span style="color:#1f1f1f;">#submenu {</span></div>
<div class="a t" style="left:1642.5px;top:927.1px;font-family:'Liberation Mono',monospace;font-size:27.7px;line-height:27.7px;color:#1f1f1f;text-decoration:underline;text-decoration-color:#9a9a9a;text-underline-offset:3px;text-decoration-thickness:1.6px;">mdYdpOM?ani…pe=embed:46</div>
<div class="a t" style="left:1051.5px;top:961.7px;font-family:'Liberation Mono',monospace;font-size:27.7px;line-height:27.7px;opacity:1;"><span style="color:#c8372d;">position</span><span style="color:#1f1f1f;">: absolute;</span></div>
<div class="a t" style="left:1051.5px;top:996.5px;font-family:'Liberation Mono',monospace;font-size:27.7px;line-height:27.7px;opacity:1;"><span style="color:#c8372d;">margin</span><span style="color:#1f1f1f;">: </span><span style="display:inline-block;width:0;height:0;border-left:14px solid #474747;border-top:9px solid transparent;border-bottom:9px solid transparent;margin:0 2.5px 0 0;vertical-align:-1px;"></span><span style="color:#1f1f1f;"> 0;</span></div>
<div class="a t" style="left:1051.5px;top:1031.3px;font-family:'Liberation Mono',monospace;font-size:27.7px;line-height:27.7px;opacity:1;"><span style="color:#c8372d;">position-anchor</span><span style="color:#1f1f1f;">: </span><span style="color:#1b56c9;">--submenu</span><span style="color:#1f1f1f;">;</span></div>
<div class="a t" style="left:1051.5px;top:1066.1px;font-family:'Liberation Mono',monospace;font-size:27.7px;line-height:27.7px;opacity:1;"><span style="color:#c8372d;">left</span><span style="color:#1f1f1f;">: anchor(</span><span style="color:#1b56c9;">--submenu</span><span style="color:#1f1f1f;"> right);</span></div>
<div class="a t" style="left:1051.5px;top:1100.9px;font-family:'Liberation Mono',monospace;font-size:27.7px;line-height:27.7px;opacity:1;"><span style="color:#c8372d;">top</span><span style="color:#1f1f1f;">: anchor(</span><span style="color:#1b56c9;">--submenu</span><span style="color:#1f1f1f;"> top);</span></div>
<div class="a t" style="left:1051.5px;top:1135.7px;font-family:'Liberation Mono',monospace;font-size:27.7px;line-height:27.7px;opacity:1;"><span style="color:#c8372d;">margin-left</span><span style="color:#1f1f1f;">: var(</span><span style="color:#1b56c9;">--padding</span><span style="color:#1f1f1f;">);</span></div>
<div class="a t" style="left:1051.5px;top:1170.5px;font-family:'Liberation Mono',monospace;font-size:27.7px;line-height:27.7px;opacity:1;"><span style="color:#c8372d;">position-try-options</span><span style="color:#1f1f1f;">: </span><span style="color:#1b56c9;">--bottom</span><span style="color:#1f1f1f;">;</span></div>
<div class="a t" style="left:1051.5px;top:1205.3px;font-family:'Liberation Mono',monospace;font-size:27.7px;line-height:27.7px;opacity:1;"><span style="color:#c8372d;">transition</span><span style="color:#1f1f1f;">: </span><span style="display:inline-block;width:0;height:0;border-left:14px solid #474747;border-top:9px solid transparent;border-bottom:9px solid transparent;margin:0 2.5px 0 0;vertical-align:-1px;"></span><span style="color:#1f1f1f;"> left 0.25s, top 0.25s;</span></div>
<div class="a t" style="left:1051.5px;top:1240.1px;font-family:'Liberation Mono',monospace;font-size:27.7px;line-height:27.7px;opacity:1;"><span style="color:#c8372d;">width</span><span style="color:#1f1f1f;">: max-content;</span></div>
<div class="a t" style="left:1004.5px;top:1274.9px;font-family:'Liberation Mono',monospace;font-size:27.7px;line-height:27.7px;opacity:1;"><span style="color:#1f1f1f;">}</span></div>
<div class="a" style="left:996.0px;top:1313.0px;width:1038.0px;height:2.0px;background:#d3e3fd;"></div>
<div class="a" style="left:996.0px;top:1315.0px;width:1038.0px;height:57.0px;background:#f3f5fb;"></div>
<div class="a" style="left:996.0px;top:1371.0px;width:1038.0px;height:1.8px;background:#d3e3fd;"></div>
<div class="a t" style="left:1009.7px;top:1328.5px;font-family:'Liberation Sans',sans-serif;font-size:30.00px;line-height:30.00px;color:#8a8a8a;font-weight:400;font-style:normal;letter-spacing:1.4px;">@position-try --bottom</div>
<div class="a" style="left:996.0px;top:1373.0px;width:1038.0px;height:217.0px;background:#fff;"></div>
<div class="a" style="left:1006.0px;top:1453.4px;width:1013.0px;height:69.3px;background:#e8eefb;"></div>
<div class="a t" style="left:1004.5px;top:1382.6px;font-family:'Liberation Mono',monospace;font-size:27.7px;line-height:27.7px;opacity:1;"><span style="color:#1f1f1f;">{</span></div>
<div class="a t" style="left:1907px;top:1387.5px;font-family:'Liberation Mono',monospace;font-size:27.7px;line-height:27.7px;color:#1b56c9;">&lt;style&gt;</div>
<div class="a t" style="left:1051.5px;top:1422.3px;font-family:'Liberation Mono',monospace;font-size:27.7px;line-height:27.7px;opacity:1;"><span style="color:#e39a90;">margin</span><span style="color:#8a8a8a;">: </span><span style="display:inline-block;width:0;height:0;border-left:14px solid #9a9a9a;border-top:9px solid transparent;border-bottom:9px solid transparent;margin:0 2.5px 0 0;vertical-align:-1px;"></span><span style="color:#8a8a8a;"> var(</span><span style="color:#c4c4c4;">--padding</span><span style="color:#8a8a8a;">) 0 0 var(</span><span style="color:#c4c4c4;">--padding</span><span style="color:#8a8a8a;">);</span></div>
<svg class="a" style="left:1007.5px;top:1419.4px;" width="32" height="32" viewBox="0 0 32 32"><rect width="32" height="32" rx="5" fill="#92aef0"/><path d="M7 16.5L13 22.5L25 10" stroke="#fff" stroke-width="4" fill="none"/></svg>
<div class="a t" style="left:1051.5px;top:1457.2px;font-family:'Liberation Mono',monospace;font-size:27.7px;line-height:27.7px;opacity:1;"><span style="color:#e39a90;">left</span><span style="color:#8a8a8a;">: anchor(</span><span style="color:#8eaae6;">--submenu</span><span style="color:#8a8a8a;"> left);</span></div>
<svg class="a" style="left:1007.5px;top:1454.3px;" width="32" height="32" viewBox="0 0 32 32"><rect width="32" height="32" rx="5" fill="#92aef0"/><path d="M7 16.5L13 22.5L25 10" stroke="#fff" stroke-width="4" fill="none"/></svg>
<div class="a t" style="left:1051.5px;top:1492.3px;font-family:'Liberation Mono',monospace;font-size:27.7px;line-height:27.7px;opacity:1;"><span style="color:#e39a90;">top</span><span style="color:#8a8a8a;">: anchor(</span><span style="color:#8eaae6;">--submenu</span><span style="color:#8a8a8a;"> bottom);</span></div>
<svg class="a" style="left:1007.5px;top:1489.4px;" width="32" height="32" viewBox="0 0 32 32"><rect width="32" height="32" rx="5" fill="#92aef0"/><path d="M7 16.5L13 22.5L25 10" stroke="#fff" stroke-width="4" fill="none"/></svg>
<div class="a t" style="left:1051.5px;top:1527.5px;font-family:'Liberation Mono',monospace;font-size:27.7px;line-height:27.7px;opacity:1;"><span style="color:#e39a90;">margin-left</span><span style="color:#8a8a8a;">: var(</span><span style="color:#c4c4c4;">--padding</span><span style="color:#8a8a8a;">);</span></div>
<svg class="a" style="left:1007.5px;top:1524.6px;" width="32" height="32" viewBox="0 0 32 32"><rect width="32" height="32" rx="5" fill="#92aef0"/><path d="M7 16.5L13 22.5L25 10" stroke="#fff" stroke-width="4" fill="none"/></svg>
<div class="a t" style="left:1004.5px;top:1562.4px;font-family:'Liberation Mono',monospace;font-size:27.7px;line-height:27.7px;opacity:1;"><span style="color:#1f1f1f;">}</span></div>
<svg class="a" style="left:1978.0px;top:1554.0px;" width="32" height="32" viewBox="0 0 32 32"><path d="M16 1V31M1 16H31" stroke="#474747" stroke-width="3.4"/></svg>
<div class="a" style="left:112.0px;top:76.0px;width:1952.0px;height:1514.0px;border-radius:20px;box-shadow:inset 0 0 0 1.5px rgba(255,255,255,0.95);"></div>
</div>
<div class="a" style="left:1426.4px;top:309px;width:420.89999999999986px;height:97.19999999999999px;border:9.8px solid #1730f0;border-radius:27px;box-sizing:border-box;"></div>
<div class="a" style="left:1315.2px;top:1014.5px;width:197.0px;height:54.200000000000045px;border:9.8px solid #1730f0;border-radius:27px;box-sizing:border-box;"></div>
<div class="a" style="left:1400.5px;top:1157.2px;width:178.5px;height:56.299999999999955px;border:9.8px solid #1730f0;border-radius:28px;box-sizing:border-box;"></div>
<div class="a" style="left:979.3px;top:1305px;width:810.2px;height:302.29999999999995px;border:9.8px solid #1730f0;border-radius:26px;box-sizing:border-box;"></div>
<svg class="a" style="left:0;top:0" width="2176" height="1738"><path d="M1415.0 1016.0L1533.0 439.9" stroke="#1730f0" stroke-width="10"/><path d="M1542.0 395.8L1556.2 448.7L1508.2 438.9Z" fill="#1730f0"/></svg>
<svg class="a" style="left:0;top:0" width="2176" height="1738"><path d="M1418.7 1202.0L1364.4 1290.9" stroke="#1730f0" stroke-width="12"/><path d="M1340.9 1329.3L1345.5 1274.7L1387.4 1300.3Z" fill="#1730f0"/></svg>
</body></html>
